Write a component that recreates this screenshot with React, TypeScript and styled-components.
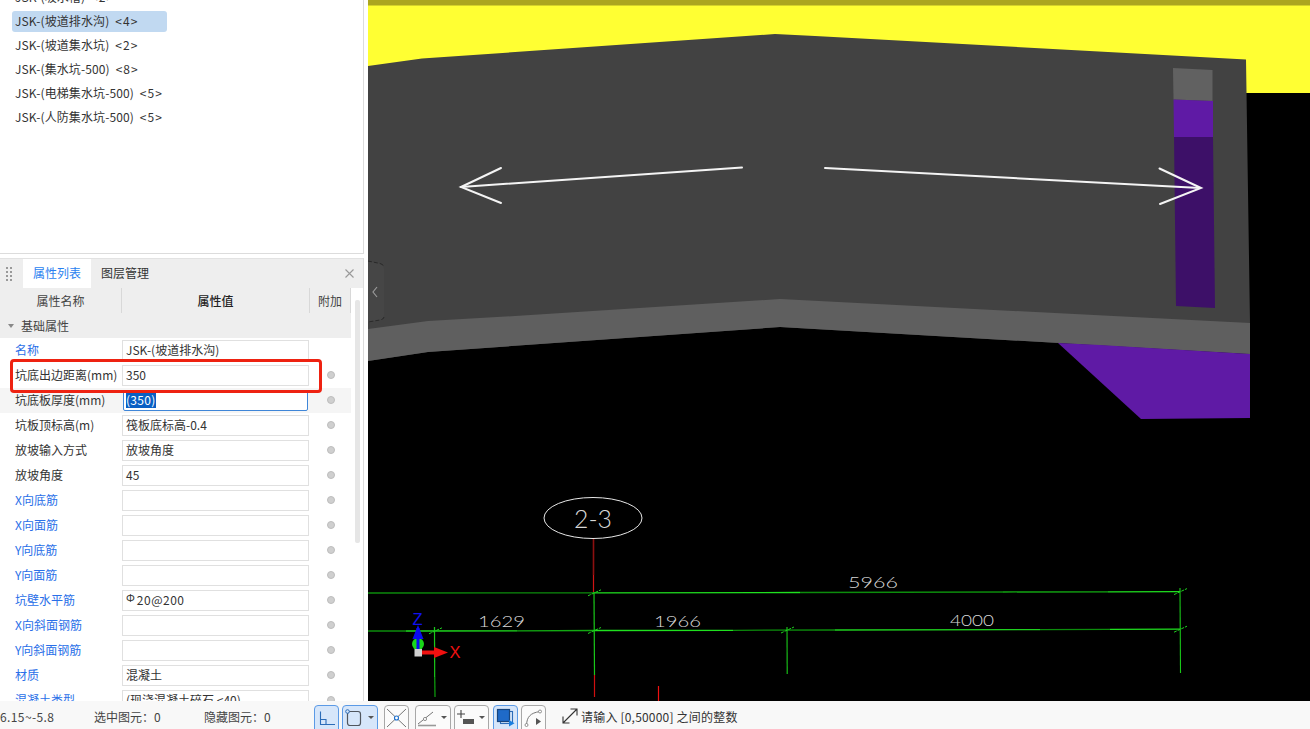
import React from 'react'
import styled, { createGlobalStyle } from 'styled-components'

const FONT = '"Noto Sans CJK SC", "Noto Sans", sans-serif'

const GlobalStyle = createGlobalStyle`
    html, body {
        margin: 0;
        padding: 0;
        height: 100%;
        overflow: hidden;
        background: #fff;
    }

    * {
        box-sizing: border-box;
    }
`

const LIST_ITEMS = [
    { name: 'JSK-(坡水槽)', count: 2 },
    { name: 'JSK-(坡道排水沟)', count: 4, selected: true },
    { name: 'JSK-(坡道集水坑)', count: 2 },
    { name: 'JSK-(集水坑-500)', count: 8 },
    { name: 'JSK-(电梯集水坑-500)', count: 5 },
    { name: 'JSK-(人防集水坑-500)', count: 5 },
]

interface PropertyRow {
    label: string
    value?: React.ReactNode
    linked?: boolean
    noDot?: boolean
    editing?: boolean
}

const PROPERTY_ROWS: PropertyRow[] = [
    { label: '名称', value: 'JSK-(坡道排水沟)', linked: true, noDot: true },
    { label: '坑底出边距离(mm)', value: '350' },
    { label: '坑底板厚度(mm)', value: '(350)', editing: true },
    { label: '坑板顶标高(m)', value: '筏板底标高-0.4' },
    { label: '放坡输入方式', value: '放坡角度' },
    { label: '放坡角度', value: '45' },
    { label: 'X向底筋', linked: true },
    { label: 'X向面筋', linked: true },
    { label: 'Y向底筋', linked: true },
    { label: 'Y向面筋', linked: true },
    { label: '坑壁水平筋', linked: true, value: 'rebar' },
    { label: 'X向斜面钢筋', linked: true },
    { label: 'Y向斜面钢筋', linked: true },
    { label: '材质', value: '混凝土', linked: true },
    { label: '混凝土类型', value: '(现浇混凝土碎石 <40)', linked: true },
]

const DIM_UPPER = [
    { x1: 368, y1: 593, x2: 594, y2: 592.8, c: '#0c8c0c' },
    { x1: 594, y1: 592.8, x2: 800, y2: 592.5, c: '#1fe01f' },
    { x1: 800, y1: 592.5, x2: 1003, y2: 592, c: '#0c8c0c' },
    { x1: 1003, y1: 592, x2: 1108, y2: 591.8, c: '#12a812' },
    { x1: 1108, y1: 591.8, x2: 1180, y2: 591.6, c: '#1fe01f' },
]

const DIM_LOWER = [
    { x1: 368, y1: 631, x2: 406, y2: 631, c: '#0c8c0c' },
    { x1: 406, y1: 631, x2: 517, y2: 630.8, c: '#1fe01f' },
    { x1: 517, y1: 630.8, x2: 594, y2: 630.5, c: '#12a812' },
    { x1: 594, y1: 630.5, x2: 733, y2: 630.3, c: '#1fe01f' },
    { x1: 733, y1: 630.3, x2: 835, y2: 630, c: '#0c8c0c' },
    { x1: 835, y1: 630, x2: 1040, y2: 629.6, c: '#1fd01f' },
    { x1: 1040, y1: 629.6, x2: 1110, y2: 629.4, c: '#0c8c0c' },
    { x1: 1110, y1: 629.4, x2: 1180, y2: 629.2, c: '#1fe01f' },
]

const DIM_TICKS = [
    [594, 592.8],
    [1180, 591.6],
    [435, 630.8],
    [594, 630.5],
    [787, 630],
    [1180, 629.2],
]

const DIM_LABELS = [
    { text: '5966', x: 848, y: 588, w: 50 },
    { text: '1629', x: 478, y: 627, w: 47 },
    { text: '1966', x: 654, y: 627, w: 47 },
    { text: '4000', x: 950, y: 626, w: 44 },
]

const SceneView = () => (
    <svg width="942" height="701" viewBox="368 0 942 701">
        <rect x="368" y="0" width="942" height="93" fill="#ffff33" />
        <rect x="368" y="0" width="942" height="5.5" fill="#aca61f" />

        <polygon
            points="368,66 422,58.5 775,34 815,36 1246,59.5 1250,323 1250,354 780,327 428,352 368,361"
            fill="#424242"
        />
        <polygon
            points="368,329 428,321 515,316 780,299 1250,323 1250,354 780,327 428,352 368,361"
            fill="#5f5f5f"
        />
        <polygon points="1058,343 1141,419 1250,418 1250,354 1100,345" fill="#5f1aa5" />

        <polygon points="1173,68 1212.5,70 1212.5,101 1173.5,99.5" fill="#616161" />
        <polygon points="1173.5,99.5 1213,101 1213,137 1174,137" fill="#5f1aa5" />
        <polygon points="1174,137 1213,137 1215,308 1176,306" fill="#3d1068" />

        <path
            d="M368 261 L380 263.5 Q384 265 384 269 L384 315 Q384 319 380 320 L368 322 Z"
            fill="#464646"
        />
        <g fill="none" stroke="#1e1e1e" strokeWidth="0.7" strokeDasharray="4 2">
            <path d="M368 261 L380 263.5 Q384 265 384 267" />
            <path d="M384 317 Q384 319 380 320 L368 322" />
        </g>
        <polyline points="377,287 373,292 377,297" fill="none" stroke="#9a9a9a" strokeWidth="1.2" />

        <g stroke="#f4f4f4" strokeWidth="2" fill="none" strokeLinecap="round" strokeLinejoin="miter">
            <line x1="742" y1="167.5" x2="461" y2="187" />
            <polyline points="501,168 461,187 501,203" />
            <line x1="825" y1="168" x2="1200" y2="188" />
            <polyline points="1159.5,168.5 1201,188 1160,204" />
        </g>

        <ellipse cx="593" cy="518" rx="49" ry="20.5" fill="none" stroke="#e8e8e8" strokeWidth="1" />
        <CadText x="574" y="528" textLength="38" lengthAdjust="spacingAndGlyphs" fontSize="26">
            2-3
        </CadText>

        <line x1="593.5" y1="539" x2="593.5" y2="575" stroke="#8c1010" strokeWidth="1.6" />
        <line x1="593.5" y1="575" x2="593.5" y2="592" stroke="#d01414" strokeWidth="1.2" />

        {DIM_UPPER.concat(DIM_LOWER).map((seg, i) => (
            <line
                key={i}
                x1={seg.x1}
                y1={seg.y1}
                x2={seg.x2}
                y2={seg.y2}
                stroke={seg.c}
                strokeWidth="1.3"
            />
        ))}

        <line x1="594" y1="592" x2="594.5" y2="675" stroke="#19c819" strokeWidth="1.2" />
        <line x1="594.5" y1="675" x2="594.5" y2="697" stroke="#d01010" strokeWidth="1.2" />
        <line x1="434.5" y1="627" x2="434.7" y2="677" stroke="#19c819" strokeWidth="1.2" />
        <line x1="434.7" y1="677" x2="435" y2="697" stroke="#0c8c0c" strokeWidth="1.4" />
        <line x1="787" y1="627" x2="787.2" y2="674" stroke="#19c819" strokeWidth="1.1" />
        <line x1="1180" y1="588" x2="1180.5" y2="673" stroke="#19c819" strokeWidth="1.1" />
        <line x1="658.5" y1="686" x2="658.5" y2="701" stroke="#f01010" strokeWidth="1.2" />

        {DIM_TICKS.map(([x, y], i) => (
            <line
                key={i}
                x1={x - 6}
                y1={y + 3}
                x2={x + 7}
                y2={y - 3}
                stroke="#1fd01f"
                strokeWidth="1"
                strokeDasharray="3 1"
            />
        ))}

        {DIM_LABELS.map((label) => (
            <CadText
                key={label.text}
                x={label.x}
                y={label.y}
                textLength={label.w}
                lengthAdjust="spacingAndGlyphs"
                fontSize="16"
            >
                {label.text}
            </CadText>
        ))}

        <circle cx="418" cy="644" r="6" fill="#19d819" />
        <rect x="416.5" y="628" width="3" height="24" fill="#0b0bf0" />
        <polygon points="418,625 412.5,639 423.5,639" fill="#0b0bf0" />
        <rect x="421" y="650.5" width="20" height="4" fill="#f01010" />
        <polygon points="448,652.5 434,647 434,658" fill="#f01010" />
        <rect x="414.5" y="649" width="7.5" height="7.5" fill="#d0d0d0" />
        <AxisLabel x="412.5" y="625" fill="#1010f0">
            Z
        </AxisLabel>
        <AxisLabel x="449.5" y="658" fill="#f01010">
            X
        </AxisLabel>
    </svg>
)

const IconOrtho = () => (
    <svg width="23" height="22" viewBox="0 0 23 22">
        <path d="M5.5 4.5 V17.5 H20 M5.5 12.5 H11 V17.5" fill="none" stroke="#2c6cb8" strokeWidth="1.1" />
    </svg>
)

const IconBox = () => (
    <svg width="20" height="22" viewBox="0 0 20 22">
        <rect x="4.5" y="4.5" width="13" height="14" rx="2.5" fill="none" stroke="#50565e" strokeWidth="1.2" />
        <circle cx="4.5" cy="4.5" r="1.8" fill="#d6e6fa" stroke="#2c6cb8" strokeWidth="1" />
    </svg>
)

const IconCross = () => (
    <svg width="23" height="22" viewBox="0 0 23 22">
        <path d="M2 2 L21 20 M21 2 L2 20" stroke="#666" strokeWidth="0.9" />
        <circle cx="11.5" cy="11" r="2" fill="#fff" stroke="#1a6fd0" strokeWidth="1.1" />
    </svg>
)

const IconAngle = () => (
    <svg width="22" height="22" viewBox="0 0 22 22">
        <path d="M2 17 L17 5" stroke="#777" strokeWidth="1" />
        <path d="M2 18.5 H20" stroke="#999" strokeWidth="1.6" />
        <circle cx="9" cy="12" r="1.6" fill="#fff" stroke="#777" strokeWidth="0.8" />
    </svg>
)

const IconDimension = () => (
    <svg width="22" height="22" viewBox="0 0 22 22">
        <path d="M6 3 V11 M2 7 H10" stroke="#444" strokeWidth="1.1" />
        <rect x="8" y="12" width="11" height="5" fill="#555" />
    </svg>
)

const IconLayers = () => (
    <svg width="23" height="22" viewBox="0 0 23 22">
        <rect x="6.5" y="4.5" width="12" height="12" fill="none" stroke="#2c6cb8" strokeWidth="1.1" />
        <rect x="3.5" y="2.5" width="12" height="12" fill="#1f6ac8" stroke="#17457e" strokeWidth="1.2" />
        <polygon points="15,13 15,19.5 20.5,16.2" fill="#1a7fe0" />
    </svg>
)

const IconArc = () => (
    <svg width="23" height="22" viewBox="0 0 23 22">
        <path d="M4.5 18 C5 10 8 6 18 4.5" fill="none" stroke="#777" strokeWidth="1" />
        <circle cx="4.5" cy="18" r="1.5" fill="#fff" stroke="#777" strokeWidth="0.8" />
        <circle cx="18" cy="4.5" r="1.5" fill="#fff" stroke="#777" strokeWidth="0.8" />
        <polygon points="14,11 14,18 19,14.5" fill="#555" />
    </svg>
)

const IconExpand = () => (
    <svg width="16" height="16" viewBox="0 0 16 16">
        <path d="M1 15 L15 1 M8.5 1 H15 V7.5 M1 8.5 V15 H7.5" fill="none" stroke="#333" strokeWidth="1.1" />
    </svg>
)

const IconClose = () => (
    <svg width="9" height="9" viewBox="0 0 9 9">
        <path d="M0.5 0.5 L8.5 8.5 M8.5 0.5 L0.5 8.5" stroke="#999" strokeWidth="1.1" />
    </svg>
)

const App = () => (
    <Page>
        <GlobalStyle />
        <Main>
            <Sidebar>
                <ListPanel>
                    {LIST_ITEMS.map((item) => (
                        <ListItem key={item.name} $selected={item.selected}>
                            {item.name}
                            <ListCount>&lt;{item.count}&gt;</ListCount>
                        </ListItem>
                    ))}
                </ListPanel>
                <PropertyPanel>
                    <TabBar>
                        <Grip>
                            {Array.from({ length: 8 }).map((_, i) => (
                                <GripDot key={i} />
                            ))}
                        </Grip>
                        <Tab $active>属性列表</Tab>
                        <Tab>图层管理</Tab>
                        <CloseButton>
                            <IconClose />
                        </CloseButton>
                    </TabBar>
                    <PropertyBody>
                        <PropertyTable>
                            <HeaderRow>
                                <HeaderCell>属性名称</HeaderCell>
                                <HeaderCell $bold>属性值</HeaderCell>
                                <HeaderCell>附加</HeaderCell>
                            </HeaderRow>
                            <SectionRow>
                                <SectionCaret />
                                基础属性
                            </SectionRow>
                            {PROPERTY_ROWS.map((row) => (
                                <Row key={row.label} $highlight={row.editing}>
                                    <RowLabel $linked={row.linked}>{row.label}</RowLabel>
                                    <ValueBox $editing={row.editing}>
                                        {row.editing ? (
                                            <SelectedText>{row.value}</SelectedText>
                                        ) : row.value === 'rebar' ? (
                                            <>
                                                <RebarMark>Φ</RebarMark>
                                                <RebarValue>20@200</RebarValue>
                                            </>
                                        ) : (
                                            row.value
                                        )}
                                    </ValueBox>
                                    <DotCell>{!row.noDot && <Dot />}</DotCell>
                                </Row>
                            ))}
                            <Highlight />
                        </PropertyTable>
                        <ScrollThumb />
                    </PropertyBody>
                </PropertyPanel>
            </Sidebar>
            <Canvas>
                <SceneView />
            </Canvas>
        </Main>
        <StatusBar>
            <StatusCell $width={94}>
                <CoordText>6.15~-5.8</CoordText>
            </StatusCell>
            <StatusCell $width={110}>选中图元：0</StatusCell>
            <StatusCell $width={110}>隐藏图元：0</StatusCell>
            <ToolButton $width={25} $active>
                <IconOrtho />
            </ToolButton>
            <ToolButton $width={36} $gap={3} $active>
                <IconBox />
                <Caret />
            </ToolButton>
            <ToolButton $width={25} $gap={6}>
                <IconCross />
            </ToolButton>
            <ToolButton $width={36} $gap={6}>
                <IconAngle />
                <Caret />
            </ToolButton>
            <ToolButton $width={35} $gap={3}>
                <IconDimension />
                <Caret />
            </ToolButton>
            <ToolButton $width={25} $gap={4} $active>
                <IconLayers />
            </ToolButton>
            <ToolButton $width={25} $gap={3}>
                <IconArc />
            </ToolButton>
            <HintIcon>
                <IconExpand />
            </HintIcon>
            <HintText>请输入 [0,50000] 之间的整数</HintText>
        </StatusBar>
    </Page>
)

export default App

const Page = styled.div`
    width: 1310px;
    height: 729px;
    display: flex;
    flex-direction: column;
    overflow: hidden;
    font-family: ${FONT};
    font-size: 12px;
    color: #333;
`

const Main = styled.div`
    display: flex;
    height: 701px;
    flex: none;
`

const Sidebar = styled.div`
    width: 368px;
    flex: none;
    display: flex;
    flex-direction: column;
    background: #fff;
    overflow: hidden;
`

const ListPanel = styled.div`
    width: 364px;
    height: 254px;
    flex: none;
    padding: 0 0 0 12px;
    border-right: 1px solid #dcdcdc;
    border-bottom: 1px solid #dcdcdc;
    overflow: hidden;
`

const ListItem = styled.div<{ $selected?: boolean }>`
    width: 155px;
    height: 21px;
    margin-bottom: 3px;
    padding: 0 0 2px 3px;
    line-height: 19px;
    letter-spacing: 0.1px;
    white-space: nowrap;
    border-radius: 3px;
    background: ${(props) => (props.$selected ? '#c1d9f1' : 'transparent')};

    &:first-child {
        margin-top: -13px;
    }
`

const ListCount = styled.span`
    margin-left: 6px;
    letter-spacing: 1px;
`

const PropertyPanel = styled.div`
    width: 364px;
    flex: 1;
    min-height: 0;
    margin-top: 4px;
    border-right: 1px solid #dcdcdc;
    display: flex;
    flex-direction: column;
`

const TabBar = styled.div`
    height: 30px;
    flex: none;
    display: flex;
    align-items: stretch;
    background: #eeeeee;
    border-top: 1px solid #e2e2e2;
`

const Grip = styled.div`
    width: 23px;
    display: grid;
    grid-template-columns: 2px 2px;
    grid-auto-rows: 2px;
    gap: 2px;
    align-content: center;
    padding-left: 6px;
`

const GripDot = styled.span`
    background: #999;
`

const Tab = styled.div<{ $active?: boolean }>`
    width: 68px;
    display: flex;
    align-items: center;
    justify-content: center;
    padding-bottom: 2px;
    background: ${(props) => (props.$active ? '#fff' : 'transparent')};
    color: ${(props) => (props.$active ? '#2a7ff0' : '#333')};
`

const CloseButton = styled.div`
    margin-left: auto;
    width: 28px;
    display: flex;
    align-items: center;
    justify-content: center;
`

const PropertyBody = styled.div`
    flex: 1;
    min-height: 0;
    display: flex;
    overflow: hidden;
`

const PropertyTable = styled.div`
    position: relative;
    width: 351px;
    flex: none;
`

const HeaderRow = styled.div`
    height: 25px;
    display: grid;
    grid-template-columns: 122px 188px 41px;
    background: #eeeeee;
`

const HeaderCell = styled.div<{ $bold?: boolean }>`
    display: flex;
    align-items: center;
    justify-content: center;
    border-right: 1px solid #d8d8d8;
    font-weight: ${(props) => (props.$bold ? 500 : 400)};
    color: ${(props) => (props.$bold ? '#222' : '#444')};
`

const SectionRow = styled.div`
    height: 25px;
    display: flex;
    align-items: center;
    background: #eeeeee;
    padding-left: 8px;
    color: #444;
`

const SectionCaret = styled.span`
    width: 0;
    height: 0;
    margin-right: 7px;
    border-left: 3px solid transparent;
    border-right: 3px solid transparent;
    border-top: 4px solid #888;
`

const Row = styled.div<{ $highlight?: boolean }>`
    height: 25px;
    display: grid;
    grid-template-columns: 122px 188px 41px;
    align-items: center;
    background: ${(props) => (props.$highlight ? '#f5f5f5' : 'transparent')};
`

const RowLabel = styled.div<{ $linked?: boolean }>`
    padding: 0 0 2px 15px;
    white-space: nowrap;
    color: ${(props) => (props.$linked ? '#2a6fe8' : '#333')};
`

const ValueBox = styled.div<{ $editing?: boolean }>`
    width: ${(props) => (props.$editing ? '185px' : '187px')};
    height: 21px;
    margin-left: ${(props) => (props.$editing ? '1px' : '0')};
    line-height: 17px;
    padding-left: ${(props) => (props.$editing ? '2px' : '3px')};
    white-space: nowrap;
    overflow: hidden;
    background: #fff;
    border: 1px solid ${(props) => (props.$editing ? '#3f86d8' : '#e0e0e0')};
    border-radius: ${(props) => (props.$editing ? '2px' : '0')};
`

const SelectedText = styled.span`
    background: #0a5fc4;
    color: #fff;
    letter-spacing: 0.3px;
`

const RebarMark = styled.span`
    font-size: 11px;
    position: relative;
    top: -3px;
    margin: 0 2px 0 0;
`

const RebarValue = styled.span`
    letter-spacing: 0.5px;
`

const DotCell = styled.div`
    display: flex;
    justify-content: center;
    padding-bottom: 1px;
`

const Dot = styled.span`
    width: 8px;
    height: 8px;
    border-radius: 50%;
    background: #cfcfcf;
    border: 1px solid #bdbdbd;
`

const Highlight = styled.div`
    position: absolute;
    left: 10px;
    top: 71px;
    width: 312px;
    height: 34px;
    border: 3px solid #ee2211;
    border-radius: 4px;
    pointer-events: none;
`

const ScrollThumb = styled.div`
    width: 5px;
    height: 243px;
    margin: 12px 0 0 4px;
    flex: none;
    background: #e6e6e6;
    border-radius: 2px;
`

const Canvas = styled.div`
    flex: 1;
    background: #000;
    overflow: hidden;

    svg {
        display: block;
    }
`

const CadText = styled.text`
    font-family: 'Lato', 'Liberation Sans', sans-serif;
    font-weight: 300;
    fill: #d8d8d8;
`

const AxisLabel = styled.text`
    font-family: 'Liberation Sans', sans-serif;
    font-size: 16.5px;
`

const StatusBar = styled.div`
    height: 28px;
    flex: none;
    display: flex;
    align-items: flex-start;
    padding-top: 4px;
    background: #f8f8f8;
    color: #444;
`

const StatusCell = styled.div<{ $width: number }>`
    width: ${(props) => props.$width}px;
    flex: none;
    height: 24px;
    line-height: 24px;
    white-space: nowrap;
`

const CoordText = styled.span`
    letter-spacing: 0.4px;
`

const ToolButton = styled.div<{ $width: number; $gap?: number; $active?: boolean }>`
    width: ${(props) => props.$width}px;
    height: 28px;
    flex: none;
    margin-left: ${(props) => props.$gap ?? 0}px;
    display: flex;
    align-items: flex-start;
    padding-top: 1px;
    border: 1px solid ${(props) => (props.$active ? '#5b9ae6' : '#a8a8a8')};
    border-radius: 4px;
    background: ${(props) => (props.$active ? '#d6e6fa' : '#fbfbfb')};
`

const Caret = styled.span`
    width: 0;
    height: 0;
    margin: 9px 3px 0 auto;
    border-left: 3px solid transparent;
    border-right: 3px solid transparent;
    border-top: 3px solid #555;
`

const HintIcon = styled.div`
    margin: 3px 0 0 16px;
    height: 16px;
`

const HintText = styled.div`
    margin-left: 3px;
    height: 24px;
    line-height: 24px;
    letter-spacing: 0.2px;
    color: #333;
    white-space: nowrap;
`
